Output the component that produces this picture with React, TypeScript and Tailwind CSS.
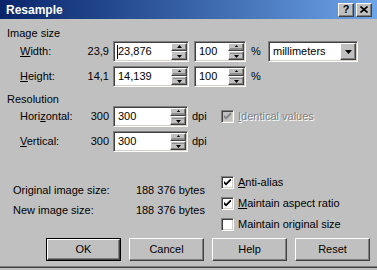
import React from "react";

const raised =
  "bg-[#c0c0c0] border border-t-white border-l-white border-b-[#404040] border-r-[#404040] shadow-[inset_-1px_-1px_0_#808080]";
const sunken =
  "border border-t-[#808080] border-l-[#808080] border-b-white border-r-white shadow-[inset_1px_1px_0_#404040,inset_-1px_-1px_0_#d4d0c8]";

function Arrow({ up, big }: { up?: boolean; big?: boolean }) {
  if (big)
    return (
      <svg width="7" height="4" viewBox="0 0 7 4">
        <path d="M0 0 L7 0 L3.5 4Z" fill="#000" />
      </svg>
    );
  return (
    <svg width="5" height="3" viewBox="0 0 5 3">
      {up ? <path d="M2.5 0 L5 3 L0 3Z" fill="#000" /> : <path d="M0 0 L5 0 L2.5 3Z" fill="#000" />}
    </svg>
  );
}

function Spin({ bar }: { bar?: boolean }) {
  return (
    <div className="flex flex-col w-[16px] h-full">
      <div className={`h-[8px] ${raised} flex flex-col items-center justify-start pt-[1px]`}>
        <Arrow up />
        {bar && <div className="mt-[1px] w-[12px] h-[2px] bg-[#8c8c8c]" />}
      </div>
      <div className={`flex-1 ${raised} flex flex-col items-center justify-end pb-[1px]`}>
        {bar && <div className="mb-[1px] w-[12px] h-[1px] bg-[#8c8c8c]" />}
        <Arrow />
      </div>
    </div>
  );
}

function Field({ value, cls, bar, caret }: { value: string; cls: string; bar?: boolean; caret?: boolean }) {
  return (
    <div className={`h-[21px] ${sunken} bg-white p-[1px] flex ${cls}`}>
      <div className="flex-1 flex items-center pl-[2px]">
        {caret && <div className="w-[1px] h-[14px] bg-black" />}
        <span className={caret ? "" : "pl-[1px]"}>{value}</span>
      </div>
      <Spin bar={bar} />
    </div>
  );
}

function Check({ checked, disabled }: { checked?: boolean; disabled?: boolean }) {
  return (
    <div
      className={`w-[13px] h-[13px] shrink-0 ${sunken} ${disabled ? "bg-[#c0c0c0]" : "bg-white"} flex items-center justify-center`}
    >
      {checked && (
        <svg width="7" height="7" viewBox="0 0 7 7">
          <path d="M0 2 L2 4 L7 -1 L7 1.5 L2 6.5 L0 4.5Z" fill={disabled ? "#808080" : "#000"} />
        </svg>
      )}
    </div>
  );
}

function Btn({ label, def }: { label: string; def?: boolean }) {
  if (def)
    return (
      <div className="w-[75px] h-[23px] border border-black">
        <div className={`w-full h-full ${raised} flex items-center justify-center`}>{label}</div>
      </div>
    );
  return <div className={`w-[75px] h-[23px] ${raised} flex items-center justify-center`}>{label}</div>;
}

export default function App() {
  return (
    <div className="w-[377px] h-[270px] bg-[#c0c0c0] text-[11px] text-black overflow-hidden flex flex-col font-['Liberation_Sans',Arial,sans-serif]">
      {/* title bar */}
      <div className="h-[19px] shrink-0 bg-linear-to-r from-[#0a246a] to-[#6ea4e8] flex items-center pl-[6px] pr-[5px]">
        <span className="text-white font-bold text-[12px] flex-1">Resample</span>
        <div className="flex items-center gap-[2px]">
          <div className={`w-[16px] h-[14px] ${raised} flex items-center justify-center font-bold text-[11px] leading-none`}>
            ?
          </div>
          <div className={`w-[16px] h-[14px] ${raised} flex items-center justify-center`}>
            <svg width="8" height="7" viewBox="0 0 8 7">
              <path d="M0.5 0.5 L7.5 6.5 M7.5 0.5 L0.5 6.5" stroke="#000" strokeWidth="1.6" />
            </svg>
          </div>
        </div>
      </div>

      {/* Image size */}
      <div className="pl-[7px] mt-[8px] leading-[13px]">Image size</div>
      <div className="mt-[1px] flex items-center h-[21px]">
        <span className="ml-[20px] w-[60px]">
          <u>W</u>idth:
        </span>
        <span className="w-[29px] text-right">23,9</span>
        <Field cls="ml-[4px] w-[76px]" value="23,876" caret />
        <Field cls="ml-[5px] w-[52px]" value="100" bar />
        <span className="ml-[5px] w-[17px]">%</span>
        <div className={`w-[90px] h-[21px] ${sunken} bg-white p-[1px] flex`}>
          <div className="flex-1 flex items-center pl-[3px]">millimeters</div>
          <div className={`w-[16px] h-full ${raised} flex items-center justify-center`}>
            <Arrow big />
          </div>
        </div>
      </div>
      <div className="mt-[4px] flex items-center h-[21px]">
        <span className="ml-[20px] w-[60px]">
          <u>H</u>eight:
        </span>
        <span className="w-[29px] text-right">14,1</span>
        <Field cls="ml-[4px] w-[76px]" value="14,139" bar />
        <Field cls="ml-[5px] w-[52px]" value="100" bar />
        <span className="ml-[5px] w-[17px]">%</span>
      </div>

      {/* Resolution */}
      <div className="pl-[7px] mt-[6px] leading-[13px]">Resolution</div>
      <div className="flex items-center h-[21px]">
        <span className="ml-[20px] w-[60px]">
          Hori<u>z</u>ontal:
        </span>
        <span className="w-[29px] text-right">300</span>
        <Field cls="ml-[4px] w-[75px]" value="300" bar />
        <span className="ml-[4px] w-[15px]">dpi</span>
        <div className="ml-[14px] flex items-center gap-[4px]">
          <Check checked disabled />
          <span className="text-[#808080] [text-shadow:1px_1px_0_#fff]">
            <u>I</u>dentical values
          </span>
        </div>
      </div>
      <div className="mt-[4px] flex items-center h-[21px]">
        <span className="ml-[20px] w-[60px]">
          <u>V</u>ertical:
        </span>
        <span className="w-[29px] text-right">300</span>
        <Field cls="ml-[4px] w-[75px]" value="300" bar />
        <span className="ml-[4px] w-[15px]">dpi</span>
      </div>

      {/* sizes + options */}
      <div className="mt-[24px] flex">
        <div className="w-[205px] pl-[13px] pt-[4px] leading-[20px] flex flex-col">
          <div className="flex justify-between">
            <span>Original image size:</span>
            <span>188 376 bytes</span>
          </div>
          <div className="flex justify-between">
            <span>New image size:</span>
            <span>188 376 bytes</span>
          </div>
        </div>
        <div className="ml-[16px] flex flex-col gap-[8px]">
          <div className="flex items-center gap-[4px] h-[13px]">
            <Check checked />
            <span>
              <u>A</u>nti-alias
            </span>
          </div>
          <div className="flex items-center gap-[4px] h-[13px]">
            <Check checked />
            <span>
              <u>M</u>aintain aspect ratio
            </span>
          </div>
          <div className="flex items-center gap-[4px] h-[13px]">
            <Check />
            <span>Maintain original size</span>
          </div>
        </div>
      </div>

      {/* buttons */}
      <div className="mt-[7px] pl-[46px] flex gap-[8px]">
        <Btn label="OK" def />
        <Btn label="Cancel" />
        <Btn label="Help" />
        <Btn label="Reset" />
      </div>

      <div className="flex-1" />
      <div className="h-[1px] bg-[#808080]" />
      <div className="h-[1px] bg-[#404040]" />
      <div className="h-[2px]" />
    </div>
  );
}
